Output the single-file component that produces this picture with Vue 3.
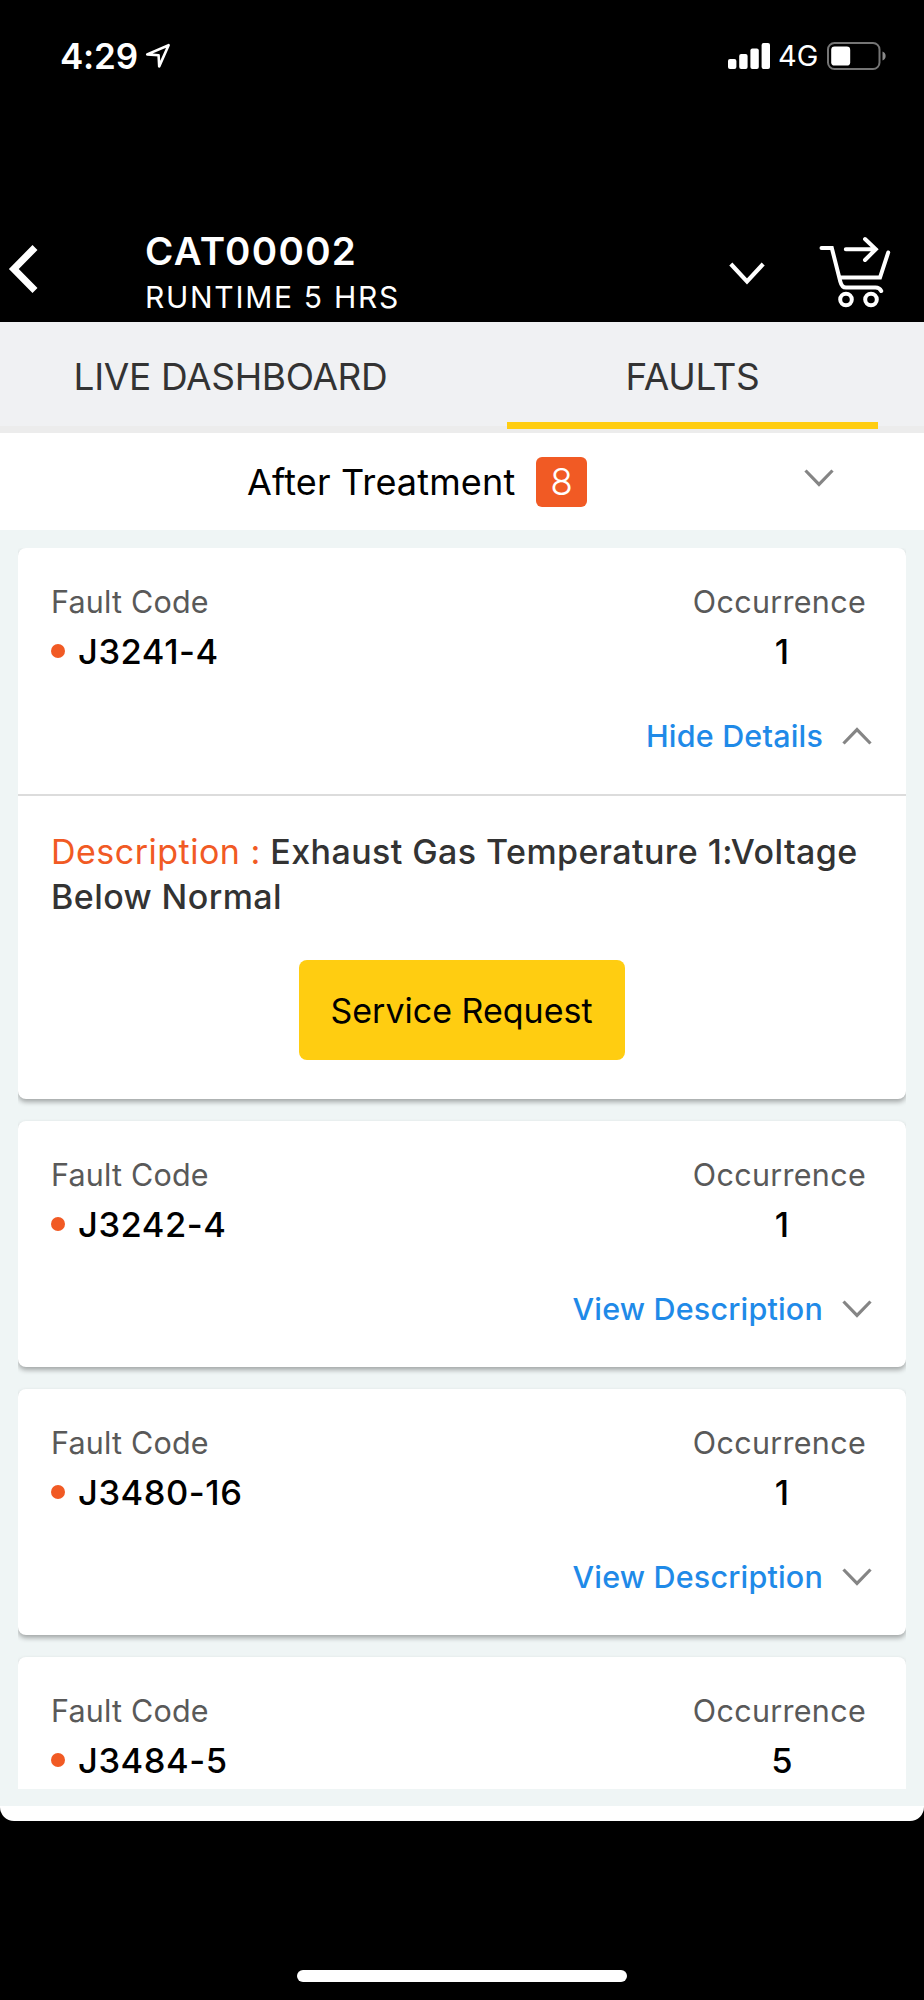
<script setup>
import { reactive, ref } from 'vue';

const tabs = ['LIVE DASHBOARD', 'FAULTS'];
const activeTab = ref('FAULTS');

const faults = reactive([
    { code: 'J3241-4', occurrence: 1, open: true, hasDetails: true, description: 'Exhaust Gas Temperature 1:Voltage Below Normal' },
    { code: 'J3242-4', occurrence: 1, open: false, hasDetails: true, description: '' },
    { code: 'J3480-16', occurrence: 1, open: false, hasDetails: true, description: '' },
    { code: 'J3484-5', occurrence: 5, open: false, hasDetails: false, description: '' }
])

const toggleFault = (fault) => {
    fault.open = !fault.open;
};
</script>

<template>
  <div class="phone">
    <div class="status-bar">
      <span class="time">4:29</span>
      <svg class="location" width="26" height="26" viewBox="0 0 26 26">
        <path d="M2.2 11.4 L23.6 2.2 L14.2 23.4 L13.6 12.2 Z" />
      </svg>
      <div class="status-right">
        <svg class="signal" width="42" height="26" viewBox="0 0 42 26">
          <rect x="0" y="16" width="8.4" height="10" rx="2" />
          <rect x="11.2" y="11" width="8.4" height="15" rx="2" />
          <rect x="22.4" y="5.5" width="8.4" height="20.5" rx="2" />
          <rect x="33.6" y="0" width="8.4" height="26" rx="2" />
        </svg>
        <span class="network">4G</span>
        <svg class="battery" width="60" height="28" viewBox="0 0 60 28">
          <rect x="1" y="1" width="51.5" height="26" rx="6.5" fill="none" stroke="#757575" stroke-width="2" />
          <rect x="4.2" y="4.6" width="19" height="19" rx="3.4" fill="#fff" />
          <path d="M55.5 9.5 a4.8 4.8 0 0 1 0 9 z" fill="#8a8a8a" />
        </svg>
      </div>
    </div>

    <header class="header">
      <svg class="back" width="30" height="48" viewBox="0 0 30 48">
        <path d="M27 2.5 L5.8 24 L27 45.5" />
      </svg>
      <div class="machine">
        <h1 class="machine-name">CAT00002</h1>
        <p class="machine-runtime">RUNTIME 5 HRS</p>
      </div>
      <svg class="header-chevron" width="36" height="24" viewBox="0 0 36 24">
        <path d="M1.8 2 L18 19.4 L34.2 2" />
      </svg>
      <svg class="cart" width="72" height="72" viewBox="0 0 72 72">
        <path d="M2.5 12 H12.8 L21.3 45.5 Q22.8 51.6 27 51.6 H56.5 Q60.5 51.6 62.2 55" />
        <path d="M21.5 41.5 H61 L69.2 16.5" />
        <path d="M26.8 13.2 H56.5 M46 3 L56.8 13.2 L46 24" />
        <circle cx="27" cy="63.5" r="5.8" />
        <circle cx="52" cy="63.5" r="5.8" />
      </svg>
    </header>

    <main class="screen">
      <nav class="tabs">
        <button v-for="tab in tabs" :key="tab" class="tab" :class="{active: tab === activeTab}" @click="activeTab = tab">
          {{ tab }}
        </button>
      </nav>

      <div class="category">
        <span class="category-name">After Treatment</span>
        <span class="badge">8</span>
        <svg class="chevron" width="30" height="18" viewBox="0 0 30 18">
          <path d="M1.5 1.5 L15 15.4 L28.5 1.5" />
        </svg>
      </div>

      <div class="faults">
        <div class="fault-list">
          <article v-for="fault in faults" :key="fault.code" class="card">
            <div class="summary">
              <div class="labels">
                <span class="code-label">Fault Code</span>
                <span class="occurrence-label">Occurrence</span>
              </div>
              <div class="values">
                <span class="dot"></span>
                <span class="code">{{ fault.code }}</span>
                <span class="count">{{ fault.occurrence }}</span>
              </div>
              <div v-if="fault.hasDetails" class="toggle" @click="toggleFault(fault)">
                <span>{{ fault.open ? 'Hide Details' : 'View Description' }}</span>
                <svg class="chevron" :class="{up: fault.open}" width="30" height="18" viewBox="0 0 30 18">
                  <path d="M1.5 1.5 L15 15.4 L28.5 1.5" />
                </svg>
              </div>
            </div>
            <div v-if="fault.open" class="details">
              <p class="description"><span class="description-label">Description :</span> {{ fault.description }}</p>
              <button class="service-btn">Service Request</button>
            </div>
          </article>
        </div>
      </div>
    </main>

    <div class="home-indicator"></div>
  </div>
</template>

<style>
body {
  background: #000;
}
</style>

<style scoped>
.phone {
  width: 924px;
  height: 2000px;
  display: flex;
  flex-direction: column;
  background: #000;
  font-family: Inter, "Liberation Sans", sans-serif;
  overflow: hidden;
}

.phone * {
  box-sizing: border-box;
}

button {
  font-family: inherit;
  border: none;
  cursor: pointer;
}

svg {
  display: block;
  flex: none;
}

/* Barra de estado */
.status-bar {
  height: 111px;
  padding: 0 37px 0 60px;
  display: flex;
  align-items: center;
  color: #fff;
}

.time {
  width: 85px;
  font-size: 35px;
  font-weight: 600;
  line-height: 42px;
  letter-spacing: -0.2px;
  white-space: nowrap;
}

.location {
  fill: none;
  stroke: #fff;
  stroke-width: 2.6;
  stroke-linejoin: round;
}

.status-right {
  margin-left: auto;
  display: flex;
  align-items: center;
}

.signal {
  fill: #fff;
}

.network {
  width: 49px;
  margin-left: 8px;
  font-size: 29px;
  line-height: 36px;
}

/* Cabecera */
.header {
  height: 211px;
  padding: 118px 33px 0 8px;
  display: flex;
  align-items: flex-start;
  color: #fff;
}

.back {
  margin-top: 16px;
  fill: none;
  stroke: #fff;
  stroke-width: 7;
}

.machine {
  width: 584px;
  margin: -1px 0 0 107px;
}

.machine-name {
  margin: 0;
  font-size: 38.5px;
  font-weight: 600;
  line-height: 46px;
  letter-spacing: 1.3px;
}

.machine-runtime {
  margin: 4px 0 0;
  font-size: 30px;
  font-weight: 400;
  line-height: 38px;
  letter-spacing: 1.7px;
}

.header-chevron {
  margin-top: 33px;
  fill: none;
  stroke: #fff;
  stroke-width: 4.2;
}

.cart {
  margin: 7px 0 0 54px;
  fill: none;
  stroke: #fff;
  stroke-width: 4;
  stroke-linecap: round;
}

/* Contenido */
.screen {
  height: 1499px;
  background: #fff;
  border-radius: 0 0 14px 14px;
  overflow: hidden;
}

.tabs {
  height: 111px;
  display: flex;
  background: #f0f1f3;
  border-bottom: 7px solid #ececec;
}

.tab {
  width: 371px;
  height: 107px;
  margin: 0 46px 0 45px;
  padding: 9px 0 0;
  background: none;
  border-bottom: 7px solid transparent;
  color: #333;
  font-size: 37px;
  letter-spacing: -0.33px;
  white-space: nowrap;
}

.tab.active {
  border-bottom-color: #ffcd11;
}

.category {
  height: 97px;
  padding: 0 90px 0 247px;
  display: flex;
  align-items: center;
  color: #000;
}

.category-name {
  width: 289px;
  font-size: 36px;
  line-height: 48px;
  letter-spacing: 0.15px;
  white-space: nowrap;
}

.badge {
  width: 51px;
  height: 50px;
  border-radius: 6px;
  background: #f15a24;
  color: #fff;
  font-size: 37px;
  font-weight: 350;
  line-height: 50px;
  text-align: center;
}

.chevron {
  fill: none;
  stroke: #858585;
  stroke-width: 3.2;
}

.category .chevron {
  margin: 0 0 7px auto;
}

.chevron.up {
  transform: rotate(180deg);
}

.faults {
  height: 1276px;
  padding: 18px 18px 17px;
  background: #eff5f5;
}

.fault-list {
  height: 1241px;
  display: flex;
  flex-direction: column;
  gap: 22px;
  overflow: hidden;
}

.card {
  flex: none;
  background: #fff;
  border-radius: 8px;
  box-shadow: 0 3px 5px rgba(0, 0, 0, 0.32);
}

.summary {
  height: 246px;
  padding: 34px 34px 0 33px;
}

.labels {
  display: flex;
  justify-content: space-between;
  color: #595959;
  font-size: 30.5px;
  line-height: 40px;
}

.code-label {
  letter-spacing: 0.2px;
}

.occurrence-label {
  margin-right: 6px;
  letter-spacing: 0.3px;
}

.values {
  height: 48px;
  margin-top: 5px;
  padding-top: 1px;
  display: flex;
  align-items: center;
  color: #000;
  font-size: 34.5px;
  font-weight: 500;
  line-height: 48px;
}

.dot {
  width: 14px;
  height: 14px;
  margin: 0 13px 2px 0;
  border-radius: 50%;
  background: #f15a24;
}

.code {
  letter-spacing: 0.55px;
}

.count {
  width: 40px;
  margin: 0 70px 0 auto;
  text-align: center;
}

.toggle {
  margin-top: 41px;
  display: flex;
  justify-content: flex-end;
  align-items: center;
  gap: 19px;
  color: #1f8ae8;
  font-size: 30.5px;
  font-weight: 500;
  line-height: 40px;
  letter-spacing: 0.18px;
  cursor: pointer;
}

.details {
  height: 305px;
  padding: 34px 34px 0 33px;
  border-top: 2px solid #dcdcdc;
  text-align: center;
}

.description {
  margin: 0 0 40px;
  color: #333;
  font-size: 34px;
  font-weight: 500;
  line-height: 44.8px;
  letter-spacing: 0.42px;
  text-align: left;
}

.description-label {
  color: #f15a24;
  font-weight: 400;
  letter-spacing: 0.5px;
}

.service-btn {
  width: 326px;
  height: 100px;
  padding: 2px 0 0;
  border-radius: 8px;
  background: #ffcd11;
  color: #000;
  font-size: 34px;
}

.home-indicator {
  width: 330px;
  height: 12px;
  margin: 149px auto 0;
  border-radius: 6px;
  background: #fff;
}
</style>
